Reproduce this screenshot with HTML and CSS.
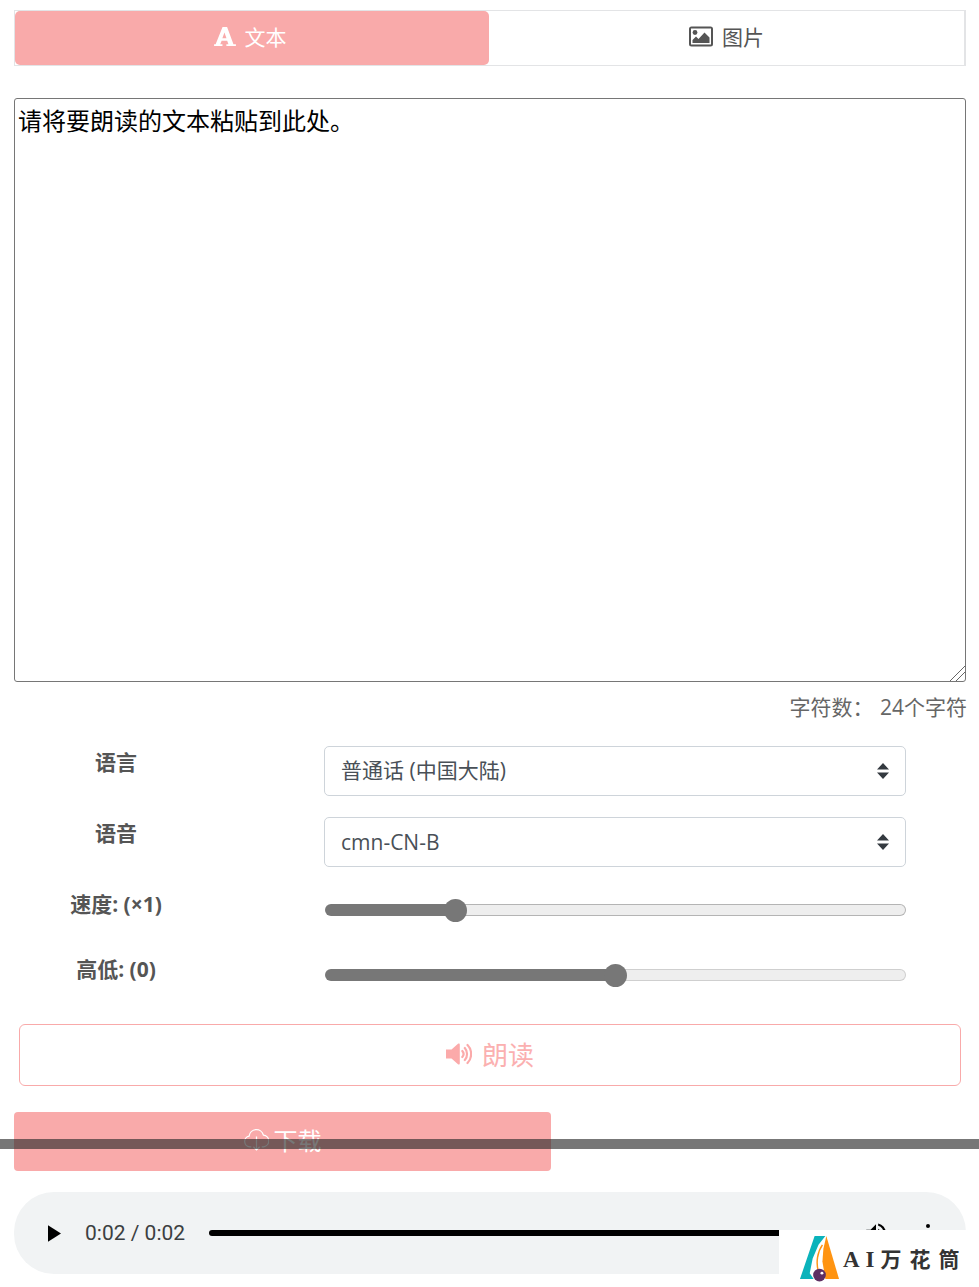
FILE: index.html
```html
<!DOCTYPE html>
<html lang="zh-CN">
<head>
<meta charset="utf-8">
<title>文本朗读</title>
<link rel="stylesheet" href="styles.css">
</head>
<body>
<main class="page">
  <nav class="tabs">
    <a class="tab tab-active">
      <svg class="tab-icon tab-icon-font" viewBox="0 0 24 22"><path fill="#fff" fill-rule="evenodd" d="M0 21v-2h1.700L9.300 0h5l7 19H24v2H13.500v-2h2.300l-1.400-4H8.300l-1.500 4h2.400v2H0zM9.100 12.500h4.500L11.400 6l-2.300 6.500z"/></svg>
      <span>文本</span>
    </a>
    <a class="tab">
      <svg class="tab-icon" viewBox="0 0 24 20"><path fill="#555" fill-rule="evenodd" d="M2.500 0h19A2.500 2.500 0 0 1 24 2.500v15a2.500 2.500 0 0 1-2.500 2.500h-19A2.500 2.500 0 0 1 0 17.500v-15A2.500 2.500 0 0 1 2.500 0zM2 2v16h20V2H2z"/><circle cx="6" cy="6" r="2.400" fill="#555"/><path fill="#555" d="M3.500 16.500v-3l3.500-3.500 2.500 2.500 6-6.500 5 5v5.500z"/></svg>
      <span>图片</span>
    </a>
  </nav>

  <textarea class="editor">请将要朗读的文本粘贴到此处。</textarea>
  <p class="count">字符数： 24个字符</p>

  <section class="form">
    <label class="label label-select">语言</label>
    <select class="select select-cjk"><option>普通话 (中国大陆)</option></select>
    <label class="label label-select">语音</label>
    <select class="select"><option>cmn-CN-B</option></select>
    <label class="label label-range">速度: (×1)</label>
    <input class="range range-speed" type="range" min="0" max="100" step="0.1" value="21.2">
    <label class="label label-range">高低: (0)</label>
    <input class="range range-pitch" type="range" min="0" max="100" step="0.1" value="50">
  </section>

  <button class="read-btn">
    <svg class="read-icon" viewBox="0 0 26 22"><path fill="#fbaaaa" d="M0 6.500h5.500L12 .8c.9-.7 1.800-.3 1.800.9v18.600c0 1.200-.9 1.600-1.800.9l-6.500-5.700H0z"/><path fill="none" stroke="#fbaaaa" stroke-width="2.200" stroke-linecap="round" d="M16.300 8c1.500 1.700 1.500 4.300 0 6M18.800 5c3 3.300 3 8.700 0 12M21.500 2c4.800 4.800 4.800 13.200 0 18"/></svg>
    <span>朗读</span>
  </button>

  <button class="download-btn">
    <svg class="dl-icon" viewBox="1 2 24 24"><path fill="none" stroke="#fff" stroke-width="1.200" d="M8 21H6.500a5.200 5.200 0 0 1-.6-10.300 7 7 0 0 1 13.700-1 5.700 5.700 0 0 1 .4 11.300H18M13 11v13m-3-3l3 3 3-3"/></svg>
    <span>下载</span>
  </button>

  <div class="player">
    <svg class="play" viewBox="0 0 14 18"><path d="M0 0l14 9-14 9z"/></svg>
    <span class="time">0:02 / 0:02</span>
    <div class="progress"></div>
    <svg class="volume" viewBox="0 0 24 24"><path d="M3 9v6h4l5 5V4L7 9H3zm13.500 3A4.500 4.500 0 0 0 14 8v8a4.500 4.500 0 0 0 2.500-4zM14 3.200v2.100a7 7 0 0 1 0 13.400v2.100a9 9 0 0 0 0-17.600z"/></svg>
    <div class="dots"><i></i><i></i><i></i></div>
  </div>
</main>

<div class="scrollbar-strip"></div>

<aside class="brand">
  <svg class="brand-mark" viewBox="0 0 42 48">
    <path fill="#0bb3bb" d="M16 1h11l-7 9-6 14-3 15 4 6H1z"/>
    <path fill="#ff9412" d="M28 1l13 44H27l-3-18 1-13z"/>
    <path fill="none" stroke="#ff9412" stroke-width="1.500" d="M24 10c-5 7-7 18-4 28"/>
    <circle cx="21" cy="41" r="6.500" fill="#5e2f63"/>
    <circle cx="23.500" cy="39" r="1.500" fill="#fff"/>
  </svg>
  <span class="brand-text"><span class="brand-latin">AI</span>万花筒</span>
</aside>
</body>
</html>
```

FILE: styles.css
```css
* { box-sizing: border-box; }
html, body { margin: 0; padding: 0; background: #fff; }
body {
  height: 1287px;
  overflow: hidden;
  position: relative;
  font-family: "Open Sans", "Noto Sans CJK SC", sans-serif;
  color: #555;
}
.page { padding: 10px 13px 0 14px; display: flex; flex-direction: column; }

.tabs {
  display: flex;
  height: 56px;
  border: 1px solid #e3e4e6;
  border-right-width: 2px;
}
.tab {
  flex: 1 1 0;
  display: flex;
  align-items: center;
  justify-content: center;
  gap: 9px;
  font-size: 21px;
  color: #555;
  border-radius: 5px;
  padding-bottom: 4px;
}
.tab-active { background: #f9aaaa; color: #fff; flex: 0 0 474px; padding-right: 4px; }
.tab-icon { width: 24px; height: 21px; }
.tab-icon-font { width: 22px; height: 20px; margin-top: 2px; }

.editor {
  display: block;
  width: 100%;
  height: 584px;
  margin-top: 32px;
  padding: 5px 3px;
  border: 1px solid #767676;
  border-radius: 3px;
  font-family: "Noto Sans CJK SC", sans-serif;
  font-size: 24px;
  line-height: 31px;
  color: #000;
  background: #fff;
  outline: none;
}
.editor::-webkit-resizer {
  background: linear-gradient(135deg, transparent 47%, #666 47%, #666 53%, transparent 53%, transparent 67%, #666 67%, #666 73%, transparent 73%);
}

.count {
  margin: 9px -1px 0 0;
  height: 32px;
  line-height: 32px;
  text-align: right;
  font-size: 21px;
  word-spacing: 1px;
  color: #666;
  white-space: pre;
}

.form {
  margin-top: 23px;
  display: grid;
  grid-template-columns: 204px 582px;
  column-gap: 106px;
  align-items: start;
}
.label {
  display: block;
  text-align: center;
  font-weight: 700;
  font-size: 21px;
  color: #555;
}
.label-select { line-height: 32px; height: 71px; }
.label-range { line-height: 30px; height: 65px; padding-top: 1px; }
.select {
  display: block;
  width: 582px;
  height: 50px;
  margin-bottom: 21px;
  padding: 0 17px 0 16px;
  border: 1px solid #ced4da;
  border-radius: 5px;
  font-family: inherit;
  font-size: 21px;
  color: #495057;
  background: #fff url("data:image/svg+xml,%3Csvg xmlns='http://www.w3.org/2000/svg' width='12' height='16'%3E%3Cpath fill='%23343a40' d='M6 0l6 6.500H0zM6 16l6-6.500H0z'/%3E%3C/svg%3E") no-repeat right 16px center;
  appearance: none;
  -webkit-appearance: none;
}
.select-cjk { padding-bottom: 2px; }
.range {
  display: block;
  width: 581px;
  height: 24px;
  margin: 10px 0 0 1px;
  padding: 0;
  background: transparent;
  appearance: none;
  -webkit-appearance: none;
  outline: none;
}
.range::-webkit-slider-runnable-track {
  height: 12px;
  border-radius: 6px;
  border: 1px solid transparent;
}
.range-speed::-webkit-slider-runnable-track {
  background:
    linear-gradient(#777, #777) 0 0 / 22.500% 100% no-repeat border-box,
    linear-gradient(#eee, #eee) padding-box,
    linear-gradient(#b4b4b4, #b4b4b4) border-box;
}
.range-pitch::-webkit-slider-runnable-track {
  background:
    linear-gradient(#777, #777) 0 0 / 50% 100% no-repeat border-box,
    linear-gradient(#eee, #eee) padding-box,
    linear-gradient(#cfcfcf, #cfcfcf) border-box;
}
.range::-webkit-slider-thumb {
  appearance: none;
  -webkit-appearance: none;
  width: 23px;
  height: 23px;
  margin-top: -6.500px;
  border-radius: 50%;
  background: #777;
  border: 0;
}

.read-btn {
  display: flex;
  align-items: center;
  justify-content: center;
  gap: 10px;
  width: 942px;
  height: 62px;
  margin: 6px 0 0 5px;
  background: #fff;
  border: 1px solid #f9aaaa;
  border-radius: 6px;
  color: #fbb0b0;
  font-family: inherit;
  font-size: 26px;
  padding: 0 0 2px;
}
.read-icon { width: 26px; height: 22px; }

.download-btn {
  display: flex;
  align-items: center;
  justify-content: center;
  gap: 5px;
  width: 537px;
  height: 59px;
  margin-top: 26px;
  background: #f9aaaa;
  border: 0;
  border-radius: 4px;
  color: #fff;
  font-family: inherit;
  font-size: 24px;
  padding: 0 0 4px;
}
.dl-icon { width: 25px; height: 25px; }

.player {
  display: flex;
  align-items: center;
  width: 952px;
  height: 82px;
  margin-top: 21px;
  padding: 0 36px 0 34px;
  background: #f1f3f4;
  border-radius: 40px;
}
.play { width: 13px; height: 17px; flex: none; }
.time {
  margin-left: 24px;
  font-family: Roboto, sans-serif;
  font-size: 21px;
  color: #3c3f41;
  white-space: nowrap;
}
.progress { flex: 1; height: 6px; margin: 0 34px 0 24px; background: #000; border-radius: 3px; }
.volume { width: 26px; height: 26px; flex: none; margin-right: 37px; }
.dots { display: flex; flex-direction: column; gap: 3px; width: 4px; flex: none; }
.dots i { width: 4px; height: 4px; border-radius: 50%; background: #000; }

/* Overlays lying over the page */
.scrollbar-strip {
  position: absolute;
  left: 0;
  right: 0;
  top: 1139px;
  height: 10px;
  background: rgba(40, 40, 40, .63);
}
.brand {
  position: absolute;
  left: 779px;
  right: 0;
  top: 1230px;
  bottom: 0;
  background: #fff;
  display: flex;
  align-items: flex-start;
}
.brand-mark { width: 41px; height: 47px; margin: 5px 0 0 20px; flex: none; }
.brand-text {
  margin: 12px 0 0 3px;
  font-family: "Noto Sans CJK SC", sans-serif;
  font-weight: 700;
  font-size: 21px;
  line-height: 32px;
  letter-spacing: 8px;
  color: #333;
  white-space: nowrap;
}
.brand-latin { font-family: "Liberation Serif", serif; font-size: 23px; letter-spacing: 6px; }
```
